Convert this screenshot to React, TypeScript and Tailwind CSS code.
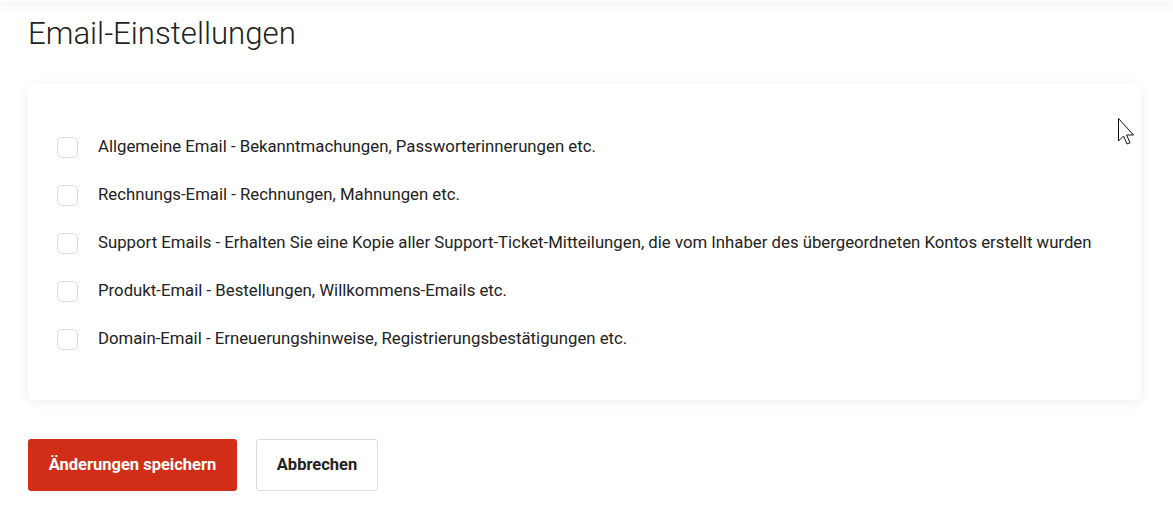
import React from "react";

const options = [
  "Allgemeine Email - Bekanntmachungen, Passworterinnerungen etc.",
  "Rechnungs-Email - Rechnungen, Mahnungen etc.",
  "Support Emails - Erhalten Sie eine Kopie aller Support-Ticket-Mitteilungen, die vom Inhaber des übergeordneten Kontos erstellt wurden",
  "Produkt-Email - Bestellungen, Willkommens-Emails etc.",
  "Domain-Email - Erneuerungshinweise, Registrierungsbestätigungen etc.",
];

export default function App() {
  return (
    <div
      className="relative min-h-[520px] bg-white text-[#1f1f1f]"
      style={{ fontFamily: "Roboto, 'Liberation Sans', sans-serif" }}
    >
      {/* shadow from the header above */}
      <div className="h-px shadow-[0_0_14px_4px_rgba(0,0,0,0.06)]" />

      <div className="pl-7 pr-8 pt-[13px]">
        <h1 className="text-[31.2px] leading-[40px] font-light text-[#222]">Email-Einstellungen</h1>

        <div className="mt-[30px] rounded-md bg-white shadow-[0_2px_14px_rgba(0,0,0,0.07)] pl-[29px] pr-6 pt-[39px] pb-[37px]">
          <div className="flex flex-col">
            {options.map((label) => (
              <label key={label} className="flex items-center h-12 cursor-pointer">
                <span className="w-[21px] h-[21px] rounded-[5px] border border-[#dcdcdc] bg-white shrink-0" />
                <span className="ml-5 text-[16.75px] text-[#222]">{label}</span>
              </label>
            ))}
          </div>
        </div>

        <div className="mt-[39px] flex gap-[19px]">
          <button className="h-[52px] pt-px rounded-[3px] bg-[#d22d17] text-white text-[16.5px] font-bold w-[209px]">
            Änderungen speichern
          </button>
          <button className="h-[52px] pt-px w-[122px] rounded-[3px] border border-[#dddddd] bg-white text-[#222] text-[16.5px] font-bold">
            Abbrechen
          </button>
        </div>
      </div>

      {/* mouse pointer */}
      <svg
        className="absolute left-[1118px] top-[118px]"
        width="18"
        height="28"
        viewBox="0 0 18 28"
      >
        <path
          d="M0.5 0.5 L0.5 23 L5.5 18 L9 26 L12 24.8 L8.6 17 L15.5 17 Z"
          fill="white"
          stroke="#111"
          strokeWidth="1"
          strokeLinejoin="round"
        />
      </svg>
    </div>
  );
}
